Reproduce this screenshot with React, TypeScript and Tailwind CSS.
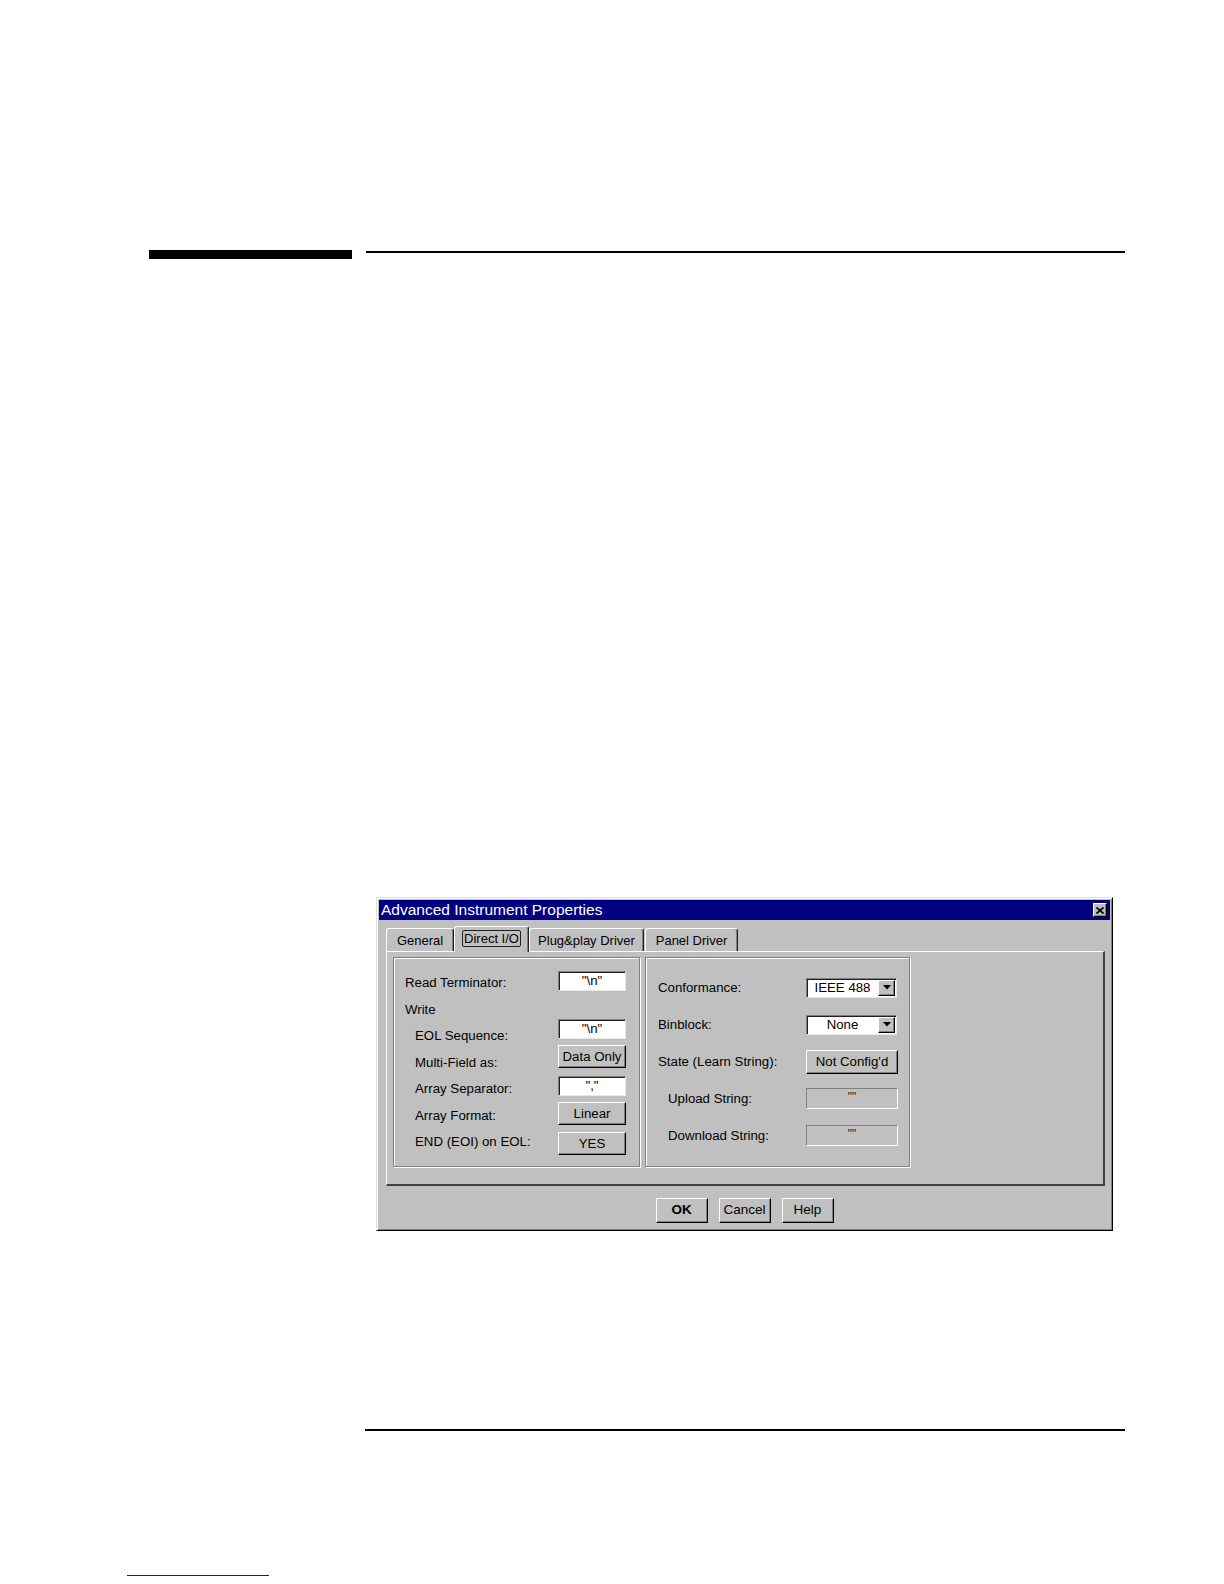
import React from 'react';

// Win95-style bevels
const RAISED =
  'bg-[#c0c0c0] border border-t-white border-l-white border-r-black border-b-black shadow-[inset_-1px_-1px_0_#808080]';
const SUNKEN_WHITE =
  'bg-white border border-t-[#808080] border-l-[#808080] border-r-[#e8e8e8] border-b-[#e8e8e8] shadow-[inset_1px_1px_0_#202020]';
const SUNKEN_GRAY =
  'bg-[#c0c0c0] border border-t-[#808080] border-l-[#808080] border-r-white border-b-white';
const GROUP = 'border border-[#808080] shadow-[1px_1px_0_#fff,inset_1px_1px_0_#fff]';

const TextField = ({ value, className = '' }: { value: string; className?: string }) => (
  <div className={`${SUNKEN_WHITE} flex w-[68px] items-center justify-center ${className}`}>{value}</div>
);

const PushButton = ({ label, className = '' }: { label: string; className?: string }) => (
  <div className={`${RAISED} flex items-center justify-center ${className}`}>{label}</div>
);

const DropDown = ({ value }: { value: string }) => (
  <div className={`${SUNKEN_WHITE} flex h-[20px] w-[91px] items-center pr-[1px]`}>
    <span className="flex-1 text-center">{value}</span>
    <div className={`${RAISED} flex h-[16px] w-[17px] items-center justify-center`}>
      <svg width="8" height="5" viewBox="0 0 8 5">
        <polygon points="0,0 8,0 4,4.5" fill="#000" />
      </svg>
    </div>
  </div>
);

const EmptyString = () => (
  <div className={`${SUNKEN_GRAY} flex h-[21px] w-[92px] items-start justify-center pt-[1px] text-[12px] leading-[14px] text-[#222]`}>
    {'""'}
  </div>
);

const Tab = ({ label, width, selected = false }: { label: string; width: string; selected?: boolean }) => (
  <div
    className={`flex items-center justify-center rounded-t-[3px] border-t border-l border-r border-t-white border-l-white border-r-[#202020] shadow-[inset_-1px_0_0_#808080] ${width} ${
      selected ? 'relative z-10 -mb-px h-[26px] bg-[#c0c0c0] pb-[3px]' : 'h-[23px] pt-[2px]'
    }`}
  >
    {selected ? (
      <span className="rounded-[2px] border border-[#202020] px-[1px] leading-[15px]">{label}</span>
    ) : (
      label
    )}
  </div>
);

const LEFT_LABELS: [string, boolean][] = [
  ['Read Terminator:', false],
  ['Write', false],
  ['EOL Sequence:', true],
  ['Multi-Field as:', true],
  ['Array Separator:', true],
  ['Array Format:', true],
  ['END (EOI) on EOL:', true],
];

export default function App() {
  return (
    <div className="h-[1584px] w-[1224px] overflow-hidden bg-white font-['Liberation_Sans',Arial,sans-serif] text-black">
      {/* chapter rule */}
      <div className="flex items-start pt-[250px]">
        <div className="ml-[149px] h-[9px] w-[203px] bg-black" />
        <div className="ml-[14px] mt-[1px] h-[2px] w-[759px] bg-black" />
      </div>

      {/* dialog */}
      <div className="ml-[376px] mt-[638px] flex h-[334px] w-[737px] flex-col border border-t-[#dfdfdf] border-l-[#dfdfdf] border-r-black border-b-black bg-[#c0c0c0] p-[2px] shadow-[inset_1px_1px_0_#fff,inset_-1px_-1px_0_#808080]">
        <div className="flex h-[20px] items-center justify-between bg-[#000080] pl-[2px] pr-[3px]">
          <span className="text-[15.5px] leading-none text-white">Advanced Instrument Properties</span>
          <div className={`${RAISED} flex h-[14px] w-[14px] items-center justify-center`}>
            <svg width="8" height="7" viewBox="0 0 8 7">
              <path d="M0.5 0.5 L7.5 6.5 M7.5 0.5 L0.5 6.5" stroke="#000" strokeWidth="1.8" />
            </svg>
          </div>
        </div>

        <div className="ml-[7px] mt-[6px] flex h-[25px] items-end text-[13px]">
          <Tab label="General" width="w-[68px]" />
          <Tab label="Direct I/O" width="w-[75px]" selected />
          <Tab label="Plug&play Driver" width="w-[115px]" />
          <div className="w-px" />
          <Tab label="Panel Driver" width="w-[93px]" />
        </div>

        <div className="ml-[7px] mr-[5px] flex h-[235px] gap-[5px] border-t border-l border-r-2 border-b-2 border-t-white border-l-white border-r-[#404040] border-b-[#404040] pl-[6px] pt-[5px] text-[13.25px]">
          {/* left group */}
          <div className={`${GROUP} flex h-[210px] w-[247px]`}>
            <div className="w-[164px] pl-[11px] pt-[11.75px]">
              {LEFT_LABELS.map(([text, indent]) => (
                <div key={text} className={`flex h-[26.5px] items-center ${indent ? 'pl-[10px]' : ''}`}>
                  {text}
                </div>
              ))}
            </div>
            <div className="flex flex-col pt-[13px]">
              <TextField value={'"\\n"'} className="h-[20px]" />
              <TextField value={'"\\n"'} className="mt-[28px] h-[20px]" />
              <PushButton label="Data Only" className="mt-[6px] h-[23px] w-[68px]" />
              <TextField value={'","'} className="mt-[8px] h-[20px]" />
              <PushButton label="Linear" className="mt-[6px] h-[23px] w-[68px]" />
              <PushButton label="YES" className="mt-[7px] h-[23px] w-[68px]" />
            </div>
          </div>

          {/* right group */}
          <div className={`${GROUP} h-[210px] w-[265px] pl-[12px] pt-[11px]`}>
            <div className="flex h-[37px] items-center">
              <span className="w-[148px]">Conformance:</span>
              <DropDown value="IEEE 488" />
            </div>
            <div className="flex h-[37px] items-center">
              <span className="w-[148px]">Binblock:</span>
              <DropDown value="None" />
            </div>
            <div className="flex h-[37px] items-center">
              <span className="w-[148px]">State (Learn String):</span>
              <PushButton label="Not Config'd" className="h-[24px] w-[92px]" />
            </div>
            <div className="flex h-[37px] items-center">
              <span className="w-[148px] pl-[10px]">Upload String:</span>
              <EmptyString />
            </div>
            <div className="flex h-[37px] items-center">
              <span className="w-[148px] pl-[10px]">Download String:</span>
              <EmptyString />
            </div>
          </div>
        </div>

        <div className="mt-[12px] flex justify-center gap-[11px] text-[13.5px]">
          <PushButton label="OK" className="h-[25px] w-[52px] font-bold" />
          <PushButton label="Cancel" className="h-[25px] w-[52px]" />
          <PushButton label="Help" className="h-[25px] w-[52px]" />
        </div>
      </div>

      {/* footer rule */}
      <div className="ml-[365px] mt-[198px] h-[2px] w-[760px] bg-black" />
      <div className="ml-[127px] mt-[144px] h-px w-[142px] bg-[#1a1a8c]" />
    </div>
  );
}
